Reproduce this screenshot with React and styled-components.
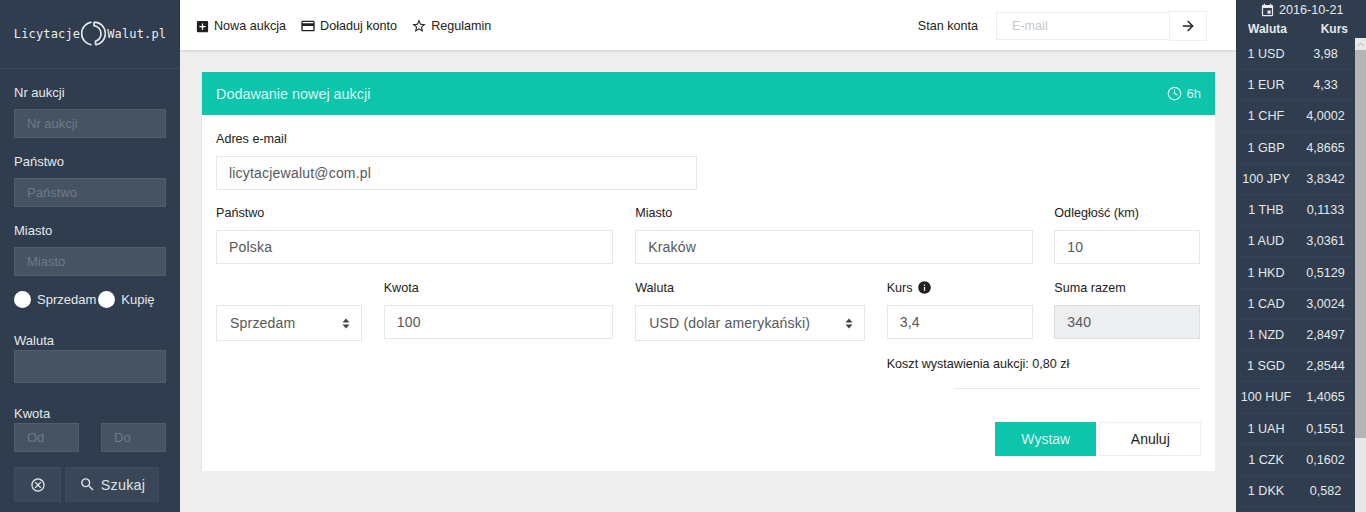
import React from "react";
import styled, { createGlobalStyle } from "styled-components";
import { ArrowRight, Clock } from "lucide-react";
import { MdAddBox, MdCreditCard, MdStarBorder, MdInfo, MdEvent, MdOutlineCancel, MdSearch } from "react-icons/md";

const GlobalStyle = createGlobalStyle`
  html, body {
    margin: 0;
    padding: 0;
    height: 100%;
    overflow: hidden;
    background: #eeeeee;
    font-family: "Liberation Sans", Arial, sans-serif;
  }
  * {
    box-sizing: border-box;
  }
`;

const Page = styled.div`
  display: flex;
  width: 1366px;
  height: 512px;
  overflow: hidden;
`;

/* left filter panel */
const Sidebar = styled.aside`
  width: 180px;
  flex: none;
  background: #2f3d4e;
  color: #e6e8ea;
  font-size: 13px;
`;

const LogoBar = styled.div`
  height: 69px;
  display: flex;
  align-items: center;
  justify-content: center;
  gap: 1px;
  padding: 0 0 1px 0;
  border-bottom: 1px solid #3a4859;
  font-family: "DejaVu Sans Mono", "Liberation Mono", monospace;
  font-size: 12px;
  letter-spacing: 0.15px;
  color: #eceef0;
`;

const Filters = styled.div`
  padding: 16px 14px 0;
`;

const SideLabel = styled.div`
  height: 16px;
  line-height: 16px;
  margin-bottom: ${(p) => p.$mb ?? 8}px;
`;

const SideInput = styled.input`
  display: block;
  width: 100%;
  height: ${(p) => p.$h ?? 29}px;
  margin-bottom: ${(p) => p.$mb ?? 16}px;
  padding: 0 12px;
  background: #465363;
  border: 1px solid #505d6c;
  color: #fff;
  font: 13px "Liberation Sans", Arial, sans-serif;
  outline: none;
  &::placeholder {
    color: #6f7a87;
    opacity: 1;
  }
`;

const RadioRow = styled.div`
  display: flex;
  align-items: center;
  height: 18px;
  margin: -2px 0 25px;
`;

const RadioDot = styled.span`
  width: 17px;
  height: 17px;
  border-radius: 50%;
  background: #fff;
  margin-right: 6px;
`;

const RadioText = styled.span`
  margin-right: 2px;
`;

const RangeRow = styled.div`
  display: flex;
  justify-content: space-between;
  margin-bottom: 15px;
  input {
    width: 65px;
    margin: 0;
  }
`;

const SideButtons = styled.div`
  display: flex;
  gap: 4px;
`;

const SideButton = styled.button`
  width: ${(p) => p.$w}px;
  height: 35px;
  display: flex;
  align-items: center;
  justify-content: center;
  gap: 5px;
  background: #384657;
  border: 1px solid #3e4c5d;
  color: #dfe2e5;
  font: 14.4px "Liberation Sans", Arial, sans-serif;
  letter-spacing: 0.2px;
  padding: 0;
`;

/* centre column */
const Main = styled.main`
  flex: 1;
  min-width: 0;
`;

const TopBar = styled.header`
  height: 50px;
  display: flex;
  align-items: center;
  background: #fff;
  box-shadow: 0 1px 3px rgba(0, 0, 0, 0.14);
  padding: 2px 29px 0 15px;
  color: #222;
  font-size: 12.6px;
`;

const NavLink = styled.a`
  display: flex;
  align-items: center;
  gap: 4px;
  margin-right: 14px;
  svg {
    color: #222;
  }
`;

const Balance = styled.span`
  margin-left: auto;
  margin-right: 18px;
`;

const TopEmail = styled.input`
  width: 173px;
  height: 28px;
  padding: 0 15px;
  border: 1px solid #eeeeee;
  border-right: none;
  outline: none;
  background: #fff;
  font: 12.6px "Liberation Sans", Arial, sans-serif;
  &::placeholder {
    color: #c8c8c8;
    opacity: 1;
  }
`;

const TopGo = styled.button`
  width: 38px;
  height: 30px;
  display: flex;
  align-items: center;
  justify-content: center;
  padding: 0;
  border: 1px solid #eeeeee;
  background: #fff;
  color: #222;
`;

const Content = styled.div`
  padding: 22px 21px 0 22px;
`;

const Card = styled.section`
  background: #fff;
  height: 399px;
  box-shadow: -1px 0 0 #e6e6e6;
`;

const CardHeader = styled.div`
  height: 43px;
  display: flex;
  align-items: center;
  justify-content: space-between;
  padding: 0 14px;
  background: #0dc5ab;
  color: #d9f7f1;
  font-size: 14.4px;
`;

const CardTime = styled.span`
  display: flex;
  align-items: center;
  gap: 5px;
  font-size: 13px;
`;

const Form = styled.div`
  display: grid;
  grid-template-columns: repeat(12, 1fr);
  column-gap: 21.7px;
  padding: 15px 14.7px 0 14px;
`;

const Field = styled.div`
  grid-column: span ${(p) => p.$span};
  height: ${(p) => p.$h ?? 74}px;
`;

const Break = styled.div`
  grid-column: 1 / -1;
  height: 0;
`;

const Label = styled.label`
  display: flex;
  align-items: center;
  gap: 4px;
  height: 17px;
  margin-bottom: 9px;
  font-size: 12.6px;
  color: #222;
`;

const TextInput = styled.input`
  display: block;
  width: 100%;
  height: 34px;
  padding: 0 12px;
  border: 1px solid ${(p) => (p.disabled ? "#dcdee0" : "#e7e7e7")};
  outline: none;
  background: ${(p) => (p.disabled ? "#eceeef" : "#fff")};
  color: #55595c;
  font: 14px "Liberation Sans", Arial, sans-serif;
  letter-spacing: 0.2px;
`;

const SelectBox = styled.div`
  display: flex;
  align-items: center;
  justify-content: space-between;
  height: 36px;
  padding: 0 11px 0 13px;
  border: 1px solid #e7e7e7;
  color: #55595c;
  font-size: 14px;
  letter-spacing: 0.2px;
`;

const Spacer = styled.div`
  height: 17px;
  margin-bottom: 9px;
`;

const Cost = styled.div`
  grid-column: 9 / -1;
  margin-top: 16px;
  font-size: 12.6px;
  line-height: 14px;
  color: #222;
  white-space: nowrap;
`;

const Divider = styled.div`
  grid-column: 1 / -1;
  justify-self: end;
  width: 246px;
  border-top: 1px solid #e7e7e7;
  margin: 17px 0 33px;
`;

const Actions = styled.div`
  grid-column: 1 / -1;
  display: flex;
  justify-content: flex-end;
  gap: 3px;
  margin-right: -1px;
`;

const Btn = styled.button`
  width: ${(p) => (p.$primary ? 101 : 102)}px;
  height: 34px;
  padding: 0;
  border: ${(p) => (p.$primary ? "none" : "1px solid #eeeeee")};
  background: ${(p) => (p.$primary ? "#0dc5ab" : "#fff")};
  color: ${(p) => (p.$primary ? "#d9f7f1" : "#222")};
  font: 14px "Liberation Sans", Arial, sans-serif;
`;

/* right rates panel */
const Rates = styled.aside`
  position: relative;
  width: 130px;
  flex: none;
  background: #2f3d4e;
  color: #e6e8ea;
  font-size: 12.6px;
`;

const RatesHead = styled.div`
  width: 119px;
  height: 38.9px;
`;

const RatesDate = styled.div`
  display: flex;
  align-items: center;
  gap: 4px;
  height: 19px;
  padding: 1px 0 0 24px;
`;

const RatesCols = styled.div`
  display: flex;
  justify-content: space-between;
  align-items: center;
  height: 19px;
  padding: 0 7px 0 12px;
  font-size: 12px;
  font-weight: bold;
`;

const Row = styled.div`
  display: flex;
  align-items: center;
  width: 119px;
  height: 31.22px;
  border-bottom: 1px solid #344253;
`;

const Cell = styled.span`
  width: ${(p) => (p.$first ? 60 : 59)}px;
  flex: none;
  text-align: center;
`;

const ScrollTrack = styled.div`
  position: absolute;
  top: 38px;
  right: 0;
  bottom: 0;
  width: 11px;
  background: #e8e8e8;
`;

const ScrollArrow = styled.div`
  height: 12px;
  display: flex;
  align-items: center;
  justify-content: center;
  color: #b0b0b0;
`;

const ScrollThumb = styled.div`
  height: 388px;
  background: #b5b5b5;
`;

const rates = [
  ["1 USD", "3,98"],
  ["1 EUR", "4,33"],
  ["1 CHF", "4,0002"],
  ["1 GBP", "4,8665"],
  ["100 JPY", "3,8342"],
  ["1 THB", "0,1133"],
  ["1 AUD", "3,0361"],
  ["1 HKD", "0,5129"],
  ["1 CAD", "3,0024"],
  ["1 NZD", "2,8497"],
  ["1 SGD", "2,8544"],
  ["100 HUF", "1,4065"],
  ["1 UAH", "0,1551"],
  ["1 CZK", "0,1602"],
  ["1 DKK", "0,582"],
];

const LogoMark = () => (
  <svg width="25" height="25" viewBox="0 0 25 25" fill="none" stroke="#e4e7ea" strokeWidth="1.7">
    <path d="M10.5 1.2A11.4 11.4 0 0 0 10.5 23.8" />
    <path d="M13 1.1A11.4 11.4 0 0 1 14.5 23.8" />
    <path d="M13 1.1V4.6A8 8 0 0 1 20 12.5A8 8 0 0 1 14.5 20.2V23.8" />
  </svg>
);

const SelectArrows = () => (
  <svg width="8" height="11" viewBox="0 0 8 11" fill="#444">
    <path d="M4 0.5 7.5 4.5H.5zM4 10.5.5 6.5h7z" />
  </svg>
);

const App = () => {
  return (
    <Page>
      <GlobalStyle />
      <Sidebar>
        <LogoBar>
          Licytacje
          <LogoMark />
          Walut.pl
        </LogoBar>
        <Filters>
          <SideLabel>Nr aukcji</SideLabel>
          <SideInput placeholder="Nr aukcji" readOnly />
          <SideLabel>Państwo</SideLabel>
          <SideInput placeholder="Państwo" readOnly />
          <SideLabel>Miasto</SideLabel>
          <SideInput placeholder="Miasto" readOnly />
          <RadioRow>
            <RadioDot />
            <RadioText>Sprzedam</RadioText>
            <RadioDot />
            <RadioText>Kupię</RadioText>
          </RadioRow>
          <SideLabel $mb={1}>Waluta</SideLabel>
          <SideInput $h={33} $mb={23} readOnly />
          <SideLabel $mb={1}>Kwota</SideLabel>
          <RangeRow>
            <SideInput placeholder="Od" readOnly />
            <SideInput placeholder="Do" readOnly />
          </RangeRow>
          <SideButtons>
            <SideButton $w={47}>
              <MdOutlineCancel size={16} />
            </SideButton>
            <SideButton $w={94}>
              <MdSearch size={17} />
              Szukaj
            </SideButton>
          </SideButtons>
        </Filters>
      </Sidebar>

      <Main>
        <TopBar>
          <NavLink>
            <MdAddBox size={15} />
            Nowa aukcja
          </NavLink>
          <NavLink>
            <MdCreditCard size={16} />
            Doładuj konto
          </NavLink>
          <NavLink>
            <MdStarBorder size={16} />
            Regulamin
          </NavLink>
          <Balance>Stan konta</Balance>
          <TopEmail placeholder="E-mail" readOnly />
          <TopGo>
            <ArrowRight size={16} strokeWidth={2} />
          </TopGo>
        </TopBar>
        <Content>
          <Card>
            <CardHeader>
              Dodawanie nowej aukcji
              <CardTime>
                <Clock size={15} strokeWidth={2} />
                6h
              </CardTime>
            </CardHeader>
            <Form>
              <Field $span={6}>
                <Label>Adres e-mail</Label>
                <TextInput defaultValue="licytacjewalut@com.pl" />
              </Field>
              <Break />
              <Field $span={5} $h={75}>
                <Label>Państwo</Label>
                <TextInput defaultValue="Polska" />
              </Field>
              <Field $span={5} $h={75}>
                <Label>Miasto</Label>
                <TextInput defaultValue="Kraków" />
              </Field>
              <Field $span={2} $h={75}>
                <Label>Odległość (km)</Label>
                <TextInput defaultValue="10" />
              </Field>
              <Field $span={2} $h={62}>
                <Spacer />
                <SelectBox>
                  Sprzedam
                  <SelectArrows />
                </SelectBox>
              </Field>
              <Field $span={3} $h={62}>
                <Label>Kwota</Label>
                <TextInput defaultValue="100" />
              </Field>
              <Field $span={3} $h={62}>
                <Label>Waluta</Label>
                <SelectBox>
                  USD (dolar amerykański)
                  <SelectArrows />
                </SelectBox>
              </Field>
              <Field $span={2} $h={62}>
                <Label>
                  Kurs
                  <MdInfo size={15} />
                </Label>
                <TextInput defaultValue="3,4" />
              </Field>
              <Field $span={2} $h={62}>
                <Label>Suma razem</Label>
                <TextInput defaultValue="340" disabled />
              </Field>
              <Cost>Koszt wystawienia aukcji: 0,80 zł</Cost>
              <Divider />
              <Actions>
                <Btn $primary>Wystaw</Btn>
                <Btn>Anuluj</Btn>
              </Actions>
            </Form>
          </Card>
        </Content>
      </Main>

      <Rates>
        <RatesHead>
          <RatesDate>
            <MdEvent size={15} />
            2016-10-21
          </RatesDate>
          <RatesCols>
            <span>Waluta</span>
            <span>Kurs</span>
          </RatesCols>
        </RatesHead>
        {rates.map(([code, value]) => (
          <Row key={code}>
            <Cell $first>{code}</Cell>
            <Cell>{value}</Cell>
          </Row>
        ))}
        <ScrollTrack>
          <ScrollArrow>
            <svg width="7" height="5" viewBox="0 0 7 5" fill="none" stroke="currentColor">
              <path d="M.5 4 3.5 1l3 3" />
            </svg>
          </ScrollArrow>
          <ScrollThumb />
        </ScrollTrack>
      </Rates>
    </Page>
  );
};

export default App;
